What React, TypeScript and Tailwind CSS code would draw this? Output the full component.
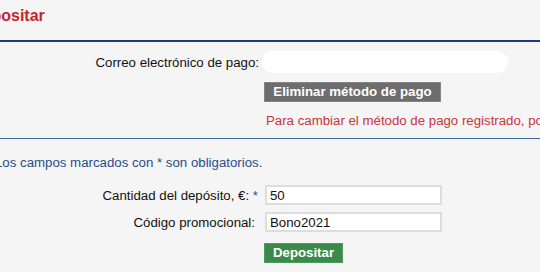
import React from "react";

const DepositPage = () => {
  return (
    <div
      className="w-[540px] h-[272px] overflow-hidden bg-[#f5f5f5] text-[13.25px] leading-[15px] text-[#111]"
      style={{ fontFamily: '"Liberation Sans", Arial, sans-serif' }}
    >
      <h1 className="pt-[7px] ml-[-29px] text-[16px] leading-[18px] font-bold text-[#c3262d] whitespace-nowrap">
        Depositar
      </h1>
      <div className="mt-[15px] h-[2px] bg-[#1b3f7e]" />

      {/* payment method */}
      <div className="mt-[9px] flex items-center">
        <label className="w-[259px] text-right whitespace-nowrap">Correo electrónico de pago:</label>
        <div className="ml-[3px] w-[246px] h-[22px] rounded-full bg-white" />
      </div>
      <div className="mt-[9px] ml-[264px]">
        <button className="h-[20px] w-[177px] bg-[#6d6d6d] border border-[#858585] text-white font-bold text-[13.25px] leading-[18px] whitespace-nowrap">
          Eliminar método de pago
        </button>
      </div>
      <p className="mt-[11px] ml-[266px] whitespace-nowrap text-[#c9343b]">
        Para cambiar el método de pago registrado, por favor contacte con soporte.
      </p>
      <div className="mt-[10px] h-[1px] bg-[#3f68a6]" />

      {/* deposit form */}
      <p className="mt-[16px] ml-[-5px] whitespace-nowrap text-[#1f4d8c]">
        Los campos marcados con * son obligatorios.
      </p>
      <div className="mt-[15px] flex items-center">
        <label className="w-[258px] text-right whitespace-nowrap">
          Cantidad del depósito, €: <span className="text-[#1f4d8c]">*</span>
        </label>
        <input
          defaultValue="50"
          className="ml-[7px] w-[177px] h-[20px] border-2 border-[#dddddd] bg-white px-[3px] text-[13.25px] outline-none"
        />
      </div>
      <div className="mt-[7px] flex items-center">
        <label className="w-[258px] pr-[3px] text-right whitespace-nowrap">Código promocional:</label>
        <input
          defaultValue="Bono2021"
          className="ml-[7px] w-[177px] h-[20px] border-2 border-[#dddddd] bg-white px-[3px] text-[13.25px] outline-none"
        />
      </div>
      <div className="mt-[11px] ml-[264px]">
        <button className="h-[20px] w-[79px] bg-[#3a8a4b] border border-[#4d9a5c] text-white font-bold text-[13.25px] leading-[18px]">
          Depositar
        </button>
      </div>
    </div>
  );
};

export default function App() {
  return <DepositPage />;
}
